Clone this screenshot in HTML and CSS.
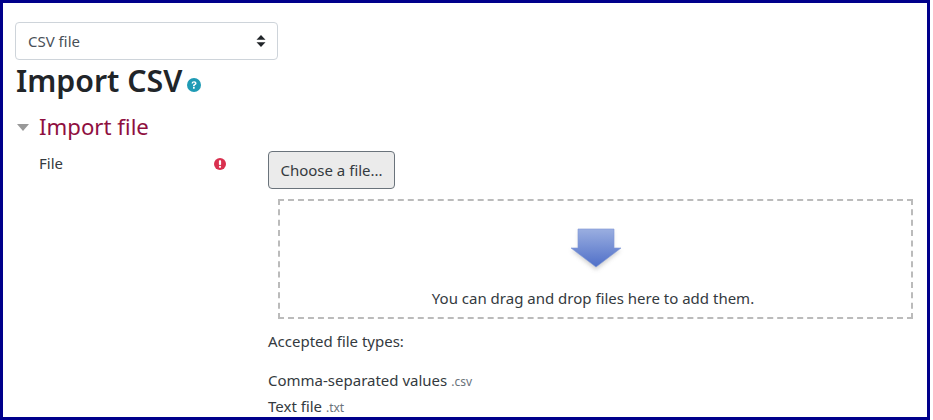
FILE: index.html
```html
<!DOCTYPE html>
<html lang="en">
<head>
  <meta charset="UTF-8">
  <meta name="viewport" content="width=device-width, initial-scale=1.0">
  <title>Import CSV</title>
  <link rel="stylesheet" href="styles.css">
</head>
<body>
<div class="frame">
  <div class="custom-select">
    <span>CSV file</span>
    <svg class="select-arrows" width="10" height="12" viewBox="0 0 10 12"><path d="M5 0l4.500 4.800H.5zM5 12L.5 7.200h9z" fill="#212529"/></svg>
  </div>
  <div class="page-title">
    <h1>Import CSV</h1>
    <svg class="help-icon" width="14" height="14" viewBox="0 0 14 14">
      <circle cx="7" cy="7" r="7" fill="#1f9bb5"/>
      <path d="M4.600 5.400C4.700 4 5.700 3.200 7.100 3.200c1.400 0 2.400.8 2.400 2 0 1-.6 1.500-1.200 1.900-.5.300-.7.600-.7 1.100H6c0-1 .4-1.500 1-1.900.5-.3.900-.6.900-1.100 0-.5-.4-.8-.9-.8-.6 0-1 .4-1 1z" fill="#fff"/>
      <rect x="6" y="9" width="1.700" height="1.700" fill="#fff"/>
    </svg>
  </div>
  <div class="section-head">
    <span class="caret"></span>
    <h2>Import file</h2>
  </div>
  <div class="form-row">
    <div class="form-label">
      <span>File</span>
      <svg class="required-icon" width="12" height="12" viewBox="0 0 13 13">
        <circle cx="6.500" cy="6.500" r="6.500" fill="#d9304f"/>
        <rect x="5.300" y="2.500" width="2.400" height="5" rx=".8" fill="#fff"/>
        <circle cx="6.500" cy="9.500" r="1.200" fill="#fff"/>
      </svg>
    </div>
    <div class="form-content">
      <button type="button" class="file-btn">Choose a file...</button>
      <div class="dropzone">
        <svg class="drop-arrow" width="60" height="46" viewBox="0 0 60 46">
          <defs>
            <linearGradient id="arrowFill" x1="0" y1="0" x2="0" y2="1">
              <stop offset="0" stop-color="#9aaee0"/>
              <stop offset="1" stop-color="#4f6fc8"/>
            </linearGradient>
            <filter id="arrowShadow" x="-20%" y="-20%" width="140%" height="150%">
              <feGaussianBlur stdDeviation="2"/>
            </filter>
          </defs>
          <path d="M13 3h34v19h8L30 42 5 22h8z" fill="#888" opacity=".4" filter="url(#arrowShadow)"/>
          <path d="M12 1h36v19h7L30 39 5 20h7z" fill="url(#arrowFill)" stroke="#7f98d8" stroke-width=".6"/>
        </svg>
        <div class="drop-text">You can drag and drop files here to add them.</div>
      </div>
      <p class="accepted">Accepted file types:</p>
      <div class="type-list">
        <div>Comma-separated values <small>.csv</small></div>
        <div>Text file <small>.txt</small></div>
      </div>
    </div>
  </div>
</div>
</body>
</html>
```

FILE: styles.css
```css
html, body {
  margin: 0;
  padding: 0;
  background-color: #fff;
}
body {
  font-family: "Noto Sans", "Open Sans", sans-serif;
  font-size: 15px;
  line-height: 24px;
  color: #343a40;
}
.frame {
  box-sizing: border-box;
  width: 930px;
  height: 420px;
  overflow: hidden;
  border: 3px solid #00008b;
  padding: 19px 0 0 12px;
}
.custom-select {
  box-sizing: border-box;
  display: flex;
  align-items: center;
  justify-content: space-between;
  width: 263px;
  height: 38px;
  padding: 0 11px 0 12px;
  border: 1px solid #ced4da;
  border-radius: 4px;
  color: #495057;
}
.page-title {
  display: flex;
  align-items: center;
  height: 42px;
}
h1 {
  margin: 0 0 0 1px;
  font-size: 30.300px;
  font-weight: 600;
  line-height: 42px;
  color: #212529;
}
.help-icon {
  margin: 8px 0 0 5px;
}
.section-head {
  display: flex;
  align-items: center;
  height: 36px;
  margin-top: 7px;
}
.caret {
  width: 0;
  height: 0;
  margin: 0 10px 0 2px;
  border-left: 6px solid transparent;
  border-right: 6px solid transparent;
  border-top: 7px solid #999;
}
h2 {
  margin: 0;
  font-size: 22.200px;
  font-weight: 400;
  line-height: 36px;
  color: #8f0f3f;
}
.form-row {
  display: flex;
  margin-top: 6px;
}
.form-label {
  display: flex;
  justify-content: space-between;
  align-items: flex-start;
  box-sizing: border-box;
  width: 253px;
  padding: 0 42px 0 24px;
}
.required-icon {
  margin-top: 7px;
}
.form-content {
  flex: 1;
}
.file-btn {
  display: block;
  box-sizing: border-box;
  width: 127px;
  height: 38px;
  padding: 0;
  font: inherit;
  color: #343a40;
  background-color: #ebebeb;
  border: 1px solid #6a737b;
  border-radius: 4px;
}
.dropzone {
  box-sizing: border-box;
  width: 635px;
  height: 120px;
  margin: 10px 0 0 10px;
  border: 2px dashed #bbb;
  text-align: center;
}
.drop-arrow {
  display: block;
  margin: 27px auto 0;
}
.drop-text {
  margin-top: 12px;
  padding-right: 5px;
}
.accepted {
  margin: 10px 0 0;
}
.type-list {
  margin-top: 15px;
}
small {
  font-size: 12px;
  color: #6a737b;
}
```
